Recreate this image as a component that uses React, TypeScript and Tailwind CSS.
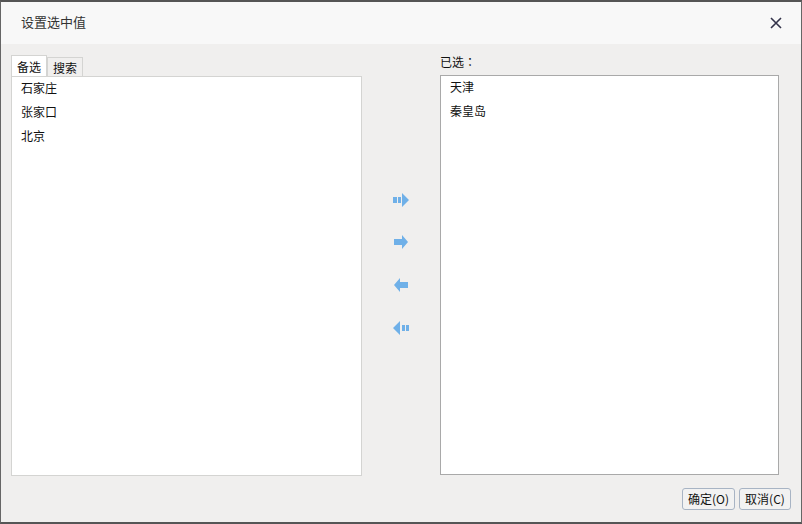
const font = { fontFamily: '"Noto Sans CJK SC", "Liberation Sans", sans-serif' };

function FastRight() {
  return (
    <svg width="18" height="14" viewBox="0 0 18 14" className="block">
      <path d="M1 4h4v6H1zM6 4h3v6H6zM10 0l7 7-7 7z" fill="#6fb0e8" />
    </svg>
  );
}

function StepRight() {
  return (
    <svg width="16" height="14" viewBox="0 0 16 14" className="block">
      <path d="M1 4h8V0l6 7-6 7v-4H1z" fill="#6fb0e8" />
    </svg>
  );
}

function StepLeft() {
  return (
    <svg width="16" height="14" viewBox="0 0 16 14" className="block">
      <path d="M15 4H7V0L1 7l6 7v-4h8z" fill="#6fb0e8" />
    </svg>
  );
}

function FastLeft() {
  return (
    <svg width="18" height="14" viewBox="0 0 18 14" className="block">
      <path d="M17 4h-3v6h3zM13 4h-3v6h3zM8 0 1 7l7 7z" fill="#6fb0e8" />
    </svg>
  );
}

function ListRows({ items }: { items: string[] }) {
  return (
    <div className="flex flex-col pl-[9px]">
      {items.map((item) => (
        <div key={item} className="h-6 leading-[22px] text-[12px] text-[#111]">
          {item}
        </div>
      ))}
    </div>
  );
}

export default function App() {
  return (
    <div
      className="w-[802px] h-[524px] flex flex-col bg-[#f0efee] border-l border-r border-t-2 border-b-2 border-l-[#666] border-r-[#666] border-t-[#555] border-b-[#555]"
      style={font}
    >
      {/* Title bar */}
      <div className="h-[42px] shrink-0 bg-[#f8f8f8] flex items-center justify-between pl-5 pr-[18px] pb-0.5">
        <span className="text-[13px] text-[#333]">设置选中值</span>
        <svg width="14" height="14" viewBox="0 0 14 14" className="block mt-0.5">
          <path d="M2 2l10 10M12 2 2 12" stroke="#33334a" strokeWidth="1.6" fill="none" />
        </svg>
      </div>

      {/* Body */}
      <div className="flex flex-1 pl-[10px] pt-[11px]">
        <div className="w-[351px] flex flex-col">
          <div className="flex h-[21px] items-end">
            <div className="h-[21px] w-[36px] pt-0.5 bg-white border border-b-0 border-[#d4d4d2] text-[12px] text-[#111] flex items-center justify-center">
              备选
            </div>
            <div className="h-[19px] w-[36px] pt-0.5 bg-[#f0efee] border border-b-0 border-[#d4d4d2] text-[12px] text-[#111] flex items-center justify-center">
              搜索
            </div>
          </div>
          <div className="h-[400px] bg-white border border-[#d4d4d2]">
            <ListRows items={['石家庄', '张家口', '北京']} />
          </div>
        </div>

        <div className="w-[78px] flex flex-col items-center pt-[138px]">
          <FastRight />
          <div className="mt-[28px]">
            <StepRight />
          </div>
          <div className="mt-[29px]">
            <StepLeft />
          </div>
          <div className="mt-[29px]">
            <FastLeft />
          </div>
        </div>

        <div className="w-[339px] flex flex-col">
          <div className="h-5 leading-[14px] text-[12px] text-[#111]">
            已选<span className="font-['Noto_Sans_CJK_TC']">：</span>
          </div>
          <div className="h-[400px] bg-white border border-[#a9a9a9]">
            <ListRows items={['天津', '秦皇岛']} />
          </div>
        </div>
      </div>

      {/* Footer */}
      <div className="flex justify-end gap-1 pr-[10px] pb-3">
        <button className="h-[22px] w-[53px] rounded-[3px] border border-[#a8b4c4] bg-[#f2f2f2] text-[12px] text-[#111] flex items-center justify-center">
          确定(O)
        </button>
        <button className="h-[22px] w-[52px] rounded-[3px] border border-[#a8b4c4] bg-[#f2f2f2] text-[12px] text-[#111] flex items-center justify-center">
          取消(C)
        </button>
      </div>
    </div>
  );
}
